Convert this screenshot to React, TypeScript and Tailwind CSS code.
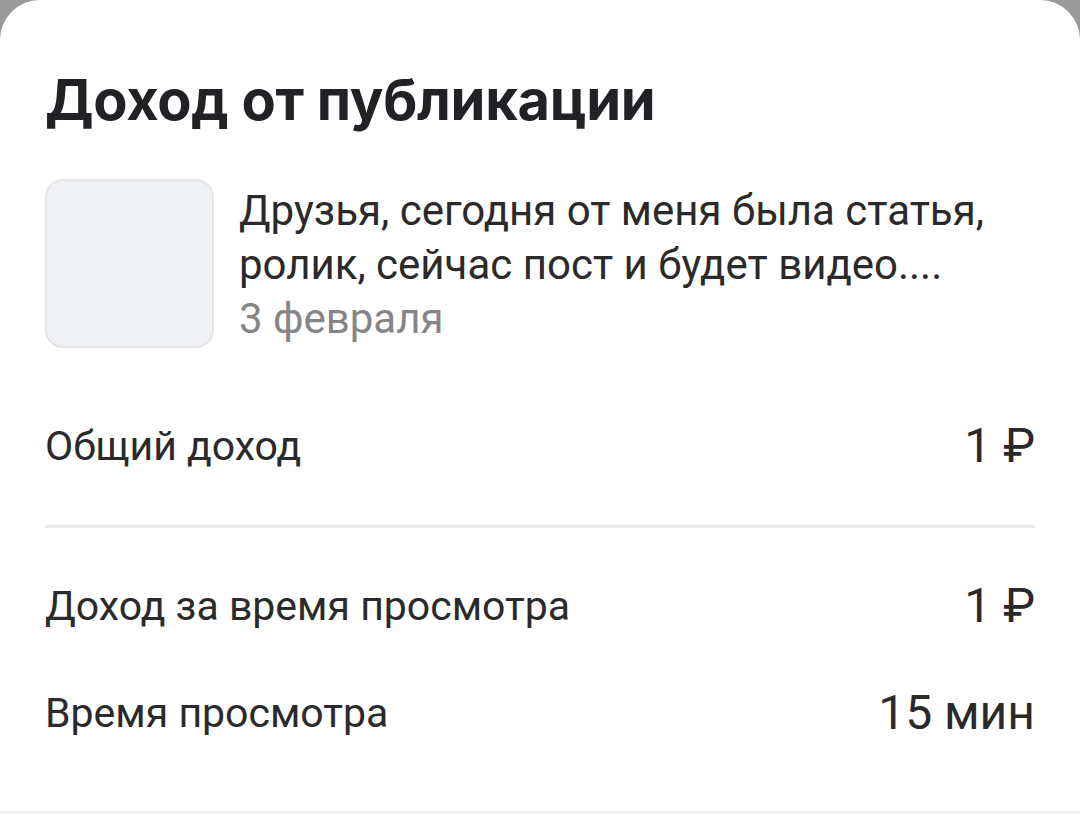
const rows = [
  { label: "Доход за время просмотра", value: "1 ₽" },
  { label: "Время просмотра", value: "15 мин" },
];

export default function App() {
  return (
    <div
      className="w-[1080px] h-[814px] bg-[#9b9b9b] overflow-hidden"
      style={{ fontFamily: "Roboto, 'Noto Sans', sans-serif" }}
    >
      <div className="h-full bg-white rounded-t-[40px] border-b-[3px] border-[#f2f2f2] flex flex-col px-[45px] pt-[66px]">
        <h1
          className="text-[56px] leading-[68px] font-bold text-[#222226] tracking-[-0.3px]"
          style={{ fontFamily: "Inter, Roboto, sans-serif" }}
        >
          Доход от публикации
        </h1>

        <div className="flex gap-[25px] mt-[45px]">
          <div className="w-[169px] h-[169px] shrink-0 rounded-[18px] bg-[#f0f1f3] border-2 border-[#e4e5e8]" />
          <div className="flex flex-col pt-[5px]">
            <p className="text-[42px] leading-[54px] text-[#2a2a2a]">
              Друзья, сегодня от меня была статья,
              <br />
              ролик, сейчас пост и будет видео....
            </p>
            <span className="text-[42px] leading-[54px] text-[#858585]">3 февраля</span>
          </div>
        </div>

        <div className="flex justify-between items-center mt-[71px] text-[41px] leading-[54px] text-[#2a2a2a]">
          <span>Общий доход</span>
          <span className="text-[48px]">1 ₽</span>
        </div>

        <div className="h-[3px] bg-[#ebebeb] mt-[52px]" />

        <div className="flex flex-col gap-[53px] mt-[51px]">
          {rows.map((row) => (
            <div
              key={row.label}
              className="flex justify-between items-center text-[41px] leading-[54px] text-[#2a2a2a]"
            >
              <span>{row.label}</span>
              <span className="text-[48px]">{row.value}</span>
            </div>
          ))}
        </div>
      </div>
    </div>
  );
}
